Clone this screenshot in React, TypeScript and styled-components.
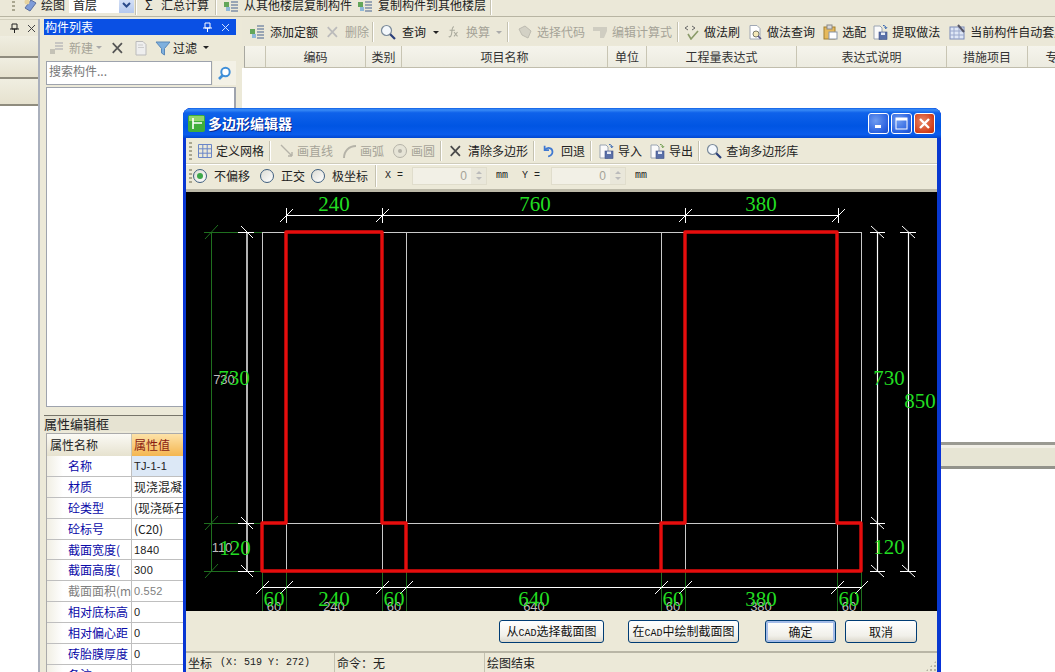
import React from "react";
import styled, { createGlobalStyle, css } from "styled-components";

const CJK = `"Noto Sans CJK SC", "Liberation Sans", sans-serif`;
const MONO = `"Liberation Mono", "Noto Sans CJK SC", monospace`;

const Global = createGlobalStyle`
  html, body { margin: 0; padding: 0; background: #fff; overflow: hidden; }
  * { box-sizing: border-box; }
`;

const Root = styled.div`
  position: relative; width: 1055px; height: 672px; overflow: hidden;
  display: flex; flex-direction: column; background: #ece9d8;
  font: 12px/1 ${CJK}; color: #222;
`;

/* ---------- top toolbar (cut by the screen edge) ---------- */
const TopBar = styled.div`
  height: 17px; overflow: hidden; flex: none;
  background: #ebe8d8; border-bottom: 1px solid #b8b5a3;
`;
const TopRow = styled.div`
  height: 9px; display: flex; align-items: center; padding-left: 12px; overflow: visible;
`;
const Grip = styled.span<{ $h?: number }>`
  flex: none; width: 3px; height: ${p => p.$h ?? 16}px;
  background: repeating-linear-gradient(to bottom, #a9a690 0 2px, transparent 2px 4px);
`;
const Sep = styled.span<{ $m?: number; $h?: number }>`
  flex: none; width: 2px; height: ${p => p.$h ?? 20}px; margin: 0 ${p => p.$m ?? 6}px;
  border-left: 1px solid #c5c2b0; border-right: 1px solid #fff;
`;
const Tool = styled.span<{ $off?: boolean; $gap?: number; $ml?: number }>`
  flex: none; display: inline-flex; align-items: center; gap: ${p => p.$gap ?? 5}px;
  margin-left: ${p => p.$ml ?? 0}px; white-space: nowrap; line-height: 14px;
  color: ${p => (p.$off ? "#a5a397" : "#222")};
  svg { flex: none; display: block; }
`;
const Sigma = styled.span`width: 9px; font-size: 13px;`;
const FloorSelect = styled.span`
  flex: none; width: 65px; height: 17px; margin-left: 4px; background: #fff; display: flex;
  align-items: center; justify-content: space-between; padding-left: 4px; position: relative;
`;
const FloorArrow = styled.span`
  width: 15px; height: 17px; background: linear-gradient(#dce6f8, #b4c8ee);
  display: flex; align-items: center; justify-content: center;
`;
const Caret = styled.span<{ $off?: boolean; $ml?: number }>`
  flex: none; width: 0; height: 0; margin-left: ${p => p.$ml ?? 6}px;
  border: 3px solid transparent; border-bottom-width: 0; border-top: 3px solid ${p => (p.$off ? "#aaa" : "#222")};
`;

/* ---------- workspace ---------- */
const Workspace = styled.div`flex: 1; min-height: 0; display: flex; padding-top: 1px;`;

const Rail = styled.div`
  width: 40px; flex: none; display: flex; flex-direction: column;
  border-right: 2px solid #aab0bc; margin-top: 1px; background: #fff;
`;
const RailHead = styled.div`
  height: 17px; background: #ebe8d8; border-top: 1px solid #d2cfbd; display: flex; align-items: center;
  justify-content: flex-end; gap: 8px; padding-right: 2px;
`;
const RailTab = styled.div<{ $h: number }>`
  height: ${p => p.$h}px; background: linear-gradient(#f0eee1, #e6e2cf);
  border-bottom: 2px solid #8f8c7e;
`;

const Panel = styled.div`
  width: 200px; flex: none; padding: 1px 4px 0; display: flex; flex-direction: column;
`;
const PanelTitle = styled.div`
  height: 16px; flex: none; background: #0a50e4; color: #fff; display: flex; align-items: center;
  justify-content: space-between; padding: 0 6px 0 1px; font-size: 12px;
`;
const TitleBtns = styled.span`display: flex; align-items: center; gap: 9px;`;
const PanelTools = styled.div`
  height: 25px; flex: none; display: flex; align-items: center; padding-left: 5px;
`;
const SearchRow = styled.div`height: 26px; flex: none; display: flex; padding: 1px 0 1px 2px; gap: 1px;`;
const SearchInput = styled.div`
  width: 166px; background: #fff; border: 1px solid #9ea3ad; color: #777; padding: 3px 2px; font-size: 12px;
`;
const SearchBtn = styled.div`
  width: 23px; background: #f3f1e6; display: flex; align-items: center; justify-content: center;
`;
const ListBox = styled.div`
  height: 320px; flex: none; margin: 1px 0 0 2px; background: #fff; border: 1px solid #9ea3ad; border-width: 1px 2px 1px 1px;
`;
const PropTitle = styled.div`
  height: 16px; flex: none; margin-top: 8px; border-top: 1px solid #77756a; background: #e6e3d2;
  font-size: 13px; line-height: 15px;
`;
const PropTable = styled.div`
  margin: 2px 0 0 2px; flex: none; background: #fff; border-top: 1px solid #aaa; border-left: 1px solid #aaa;
`;
const PropRow = styled.div`
  height: 20.9px; display: grid; grid-template-columns: 84px 1fr; border-bottom: 1px solid #bfbfbf;
`;
const PropHeadRow = styled(PropRow)`height: 22px; border-bottom: none;`;
const HeadName = styled.div`
  background: linear-gradient(#fbfaf5, #e6e2cf); padding: 5px 0 0 3px; font-size: 12px;
`;
const HeadValue = styled.div`
  background: linear-gradient(#fde2a8, #f4b650); color: #8a1c12; padding: 5px 0 0 2px; font-size: 12px; border-left: 1px solid #c8c5b3;
`;
const PropName = styled.div<{ $off?: boolean }>`
  padding: 4px 0 0 21px; white-space: nowrap; overflow: hidden;
  color: ${p => (p.$off ? "#808080" : "#0a0aa8")}; font-size: 12px;
  background: linear-gradient(to right, #f1efe4, #fff 16px);
`;
const PropValue = styled.div<{ $latin?: boolean; $off?: boolean; $sel?: boolean }>`
  border-left: 1px solid #bfbfbf; white-space: nowrap; overflow: hidden; padding: 4px 0 0 2px;
  color: ${p => (p.$off ? "#808080" : "#222")};
  background: ${p => (p.$sel ? "#dce8f6" : "#fff")};
  ${p => p.$latin && css`font-family: "Liberation Sans", sans-serif; font-size: 11px; letter-spacing: .2px; padding-top: 5px;`}
`;

const Work = styled.div`flex: 1; min-width: 0; display: flex; flex-direction: column; padding-left: 2px;`;
const WorkTools = styled.div`
  height: 26px; flex: none; margin-top: 1px; display: flex; align-items: center; padding-left: 7px; background: #ebe8d8;
  overflow: hidden;
`;
const GridHead = styled.div`
  height: 22px; flex: none; display: flex; margin: 1px 0 0 2px; background: linear-gradient(#f5f4ec, #ecebe0);
  border-bottom: 1px solid #c0bdac; border-left: 1px solid #a8a8a0; overflow: hidden;
`;
const GridCol = styled.div<{ $w: number }>`
  width: ${p => p.$w}px; flex: none; display: flex; align-items: center; justify-content: center;
  border-right: 1px solid #c8c5b3; color: #333; white-space: nowrap;
`;
const GridBody = styled.div`height: 374px; flex: none; background: #fff;`;
const Band = styled.div`
  height: 27px; flex: none; background: #e7e5d4; border-top: 3px solid #9a9a92; border-bottom: 3px solid #93938b;
  box-shadow: inset 0 3px 0 #f1efe6;
`;
const LowerBody = styled.div`flex: 1; background: #fff;`;

/* ---------- dialog ---------- */
const Dialog = styled.div`
  position: absolute; left: 183px; top: 108px; width: 758px; height: 564px;
  display: flex; flex-direction: column; background: #0838d0; border-radius: 8px 8px 0 0;
  padding: 0 4px 0 3px; box-shadow: inset 0 0 0 1px #0831d9;
`;
const TitleBar = styled.div`
  height: 30px; flex: none; margin: 0 -4px 0 -3px; padding: 0 6px 0 5px; display: flex; align-items: center;
  border-radius: 8px 8px 0 0; color: #fff; font-weight: 700; font-size: 14px; gap: 2px;
  background: linear-gradient(#0f5fe6 0, #3a8cf6 6%, #0f62ea 16%, #0055e3 60%, #0a5cec 88%, #0046d0 100%);
  text-shadow: 1px 1px 0 #0a2a90;
  svg { flex: none; }
`;
const TitleText = styled.span`flex: 1; margin: -1px 0 0 1px;`;
const WinBtn = styled.span<{ $close?: boolean }>`
  width: 21px; height: 21px; border: 1px solid #fff; border-radius: 3px; flex: none;
  display: flex; align-items: center; justify-content: center;
  background: ${p => p.$close
    ? "radial-gradient(circle at 40% 40%, #e88a6a, #d2401c 70%, #b8300f)"
    : "radial-gradient(circle at 35% 35%, #6f9cf0, #2a62e0 70%, #1c4cc8)"};
`;
const DlgTools = styled.div`
  height: 26px; flex: none; display: flex; align-items: center; padding-left: 3px; background: #ece9d8;
  border-bottom: 1px solid #cfccbb;
`;
const DlgOptions = styled.div`
  height: 28px; flex: none; display: flex; align-items: center; padding: 0 0 3px 3px; background: #ece9d8;
  border-bottom: 3px solid #bcb9a8; border-top: 1px solid #fff;
`;
const Radio = styled.span<{ $on?: boolean; $ml?: number }>`
  flex: none; width: 14px; height: 14px; border-radius: 50%; border: 1px solid #3f5f7f; margin-left: ${p => p.$ml ?? 0}px;
  background: linear-gradient(135deg, #dcdcd4, #fff); display: flex; align-items: center; justify-content: center;
  &::after { content: ""; width: 6px; height: 6px; border-radius: 50%; background: ${p => (p.$on ? "#3da84a" : "transparent")}; }
`;
const OptLabel = styled.span`flex: none; margin-left: 7px;`;
const Mono = styled.span<{ $ml?: number; $w?: number }>`
  flex: none; font: 10px/1 ${MONO}; color: #222; margin-left: ${p => p.$ml ?? 0}px; white-space: pre; width: ${p => (p.$w ? p.$w + "px" : "auto")};
`;
const Spin = styled.span<{ $ml: number }>`
  flex: none; width: 75px; height: 18px; margin-left: ${p => p.$ml}px; background: #f2f0e6;
  border: 1px solid #e0ddcc; display: flex; align-items: center; justify-content: flex-end;
  font: 12px/1 "Liberation Sans", sans-serif; color: #a5a397;
`;
const SpinArrows = styled.span`
  width: 15px; height: 16px; margin-left: 4px; background: #e9e7da; display: flex; flex-direction: column;
  align-items: center; justify-content: center; gap: 3px;
`;
const TriUp = styled.span`width: 0; height: 0; border: 3px solid transparent; border-top-width: 0; border-bottom: 3px solid #bbb;`;
const TriDown = styled.span`width: 0; height: 0; border: 3px solid transparent; border-bottom-width: 0; border-top: 3px solid #bbb;`;
const Canvas = styled.div`height: 419px; flex: none; background: #000; svg { display: block; }`;
const DlgFoot = styled.div`
  height: 42px; flex: none; background: #ece9d8; border-bottom: 2px solid #b9b6a6; display: flex; align-items: flex-start;
  padding: 9px 0 0 313px;
`;
const DlgButton = styled.button<{ $w: number; $ml?: number; $def?: boolean }>`
  width: ${p => p.$w}px; height: 23px; margin-left: ${p => p.$ml ?? 0}px; padding: 0; flex: none;
  border: 1px solid #003c74; border-radius: 3px; font: 12px/1 ${CJK}; color: #111;
  background: linear-gradient(#fff, #f1f0ea 70%, #dcd8cc);
  box-shadow: ${p => (p.$def ? "inset 0 0 0 2px #a4bce8" : "none")};
`;
const Narrow = styled.span`font: 10px/1 ${MONO};`;
const StatusBar = styled.div`
  flex: 1; background: #ece9d8; display: grid; grid-template-columns: 149px 150px 1fr; align-items: center; position: relative;
`;
const StatusCell = styled.div`
  height: 100%; display: flex; align-items: center; gap: 8px; padding-left: 2px; border-right: 1px solid #c4c1b0; white-space: nowrap;
  font-size: 12px;
`;
const StatusLast = styled(StatusCell)`border-right: none;`;
const SizeGrip = styled.span`
  position: absolute; right: 0; bottom: 0; width: 12px; height: 12px;
  background: radial-gradient(#b5b2a0 1px, transparent 1.2px) 0 0 / 4px 4px;
  clip-path: polygon(100% 0, 100% 100%, 0 100%);
`;

/* ---------- icons ---------- */
const I = ({ w = 16, children }: { w?: number; children: React.ReactNode }) => (
  <svg width={w} height={16} viewBox="0 0 16 16" fill="none">{children}</svg>
);
const CrossIcon = ({ c = "#555" }: { c?: string }) => (
  <I w={14}><path d="M2 2.5 12.5 13.5M12.5 2.5 2 13.5" stroke={c} strokeWidth="2" /></I>
);
const SearchIcon = ({ w = 16 }: { w?: number }) => (
  <I w={w}><circle cx="6.5" cy="6.5" r="5" fill="#f4f8fc" stroke="#7a8a9a" strokeWidth="1.2" /><path d="M10.2 10.2 15 15" stroke="#2a3f7a" strokeWidth="2.2" /></I>
);
const DocIcon = ({ off }: { off?: boolean }) => (
  <I><path d="M3 1.5h7l3 3V15H3z" fill={off ? "#eee" : "#fbfbfb"} stroke={off ? "#bbb" : "#8a96a8"} /><path d="M5 5h5M5 7.5h6" stroke={off ? "#ccc" : "#b0b8c4"} /></I>
);
const Disk = ({ arrow = "#2b5fb0" }: { arrow?: string }) => (
  <I>
    <path d="M2 2h6l2 2v11H2z" fill="#fafafa" stroke="#9aa4b2" />
    <rect x="7" y="8" width="8" height="7.5" fill="#5a70a8" stroke="#3f5288" strokeWidth=".6" />
    <rect x="9" y="8.5" width="4" height="2.5" fill="#e8ecf6" />
    <path d="M11 1.5c2 0 3 1 3 3M14 4.5l-1.5-1M14 4.5l1-1.3" stroke={arrow} strokeWidth="1" />
  </I>
);
const StackIcon = () => (
  <I>
    <rect x="1" y="5" width="5" height="5" fill="#63a65a" />
    <rect x="3" y="10" width="4" height="4" fill="#8fb8d8" />
    <path d="M8 2h7M8 5h7M8 8h7M8 11h7M8 14h7" stroke="#7f8fa8" strokeWidth="1.4" />
  </I>
);

/* ---------- drawing ---------- */
const GRAY = "#c9c9c9";
const WHITE = "#fff";
const DARK = "#1f6f1f";
const GREEN = "#22dd22";
const xs = [262, 286, 382, 406, 661, 685, 837, 861];
const topTicks = [286, 382, 685, 838];
const ys = [232, 523, 571];
const redPath = "M286 232H382V523H406V571H661V523H685V232H837V523H861V571H262V523H286Z";
const bottomLabels: [number, string][] = [[274, "60"], [334, "240"], [394, "60"], [534, "640"], [673, "60"], [761, "380"], [849, "60"]];

const DimText = styled.text`
  font-family: "Liberation Serif", serif; font-size: 21px; fill: ${GREEN}; text-anchor: middle;
`;
const SubText = styled.text`
  font-family: "Liberation Sans", sans-serif; font-size: 13px; fill: #bdbdbd; text-anchor: middle;
`;

const Drawing = () => (
  <svg width="751" height="419" viewBox="186 192 751 419">
    <g stroke={GRAY} strokeWidth="1" shapeRendering="crispEdges">
      <path d="M262 232.5H862M262 523.5H862" />
      {xs.map(x => <path key={x} d={`M${x + 0.5} 232V572`} />)}
    </g>
    <g stroke={DARK} strokeWidth="1">
      <path d="M211.5 232V572" shapeRendering="crispEdges" />
      {ys.map(y => (
        <g key={y}>
          <path d={`M204 ${y + 0.5}H262`} shapeRendering="crispEdges" />
          <path d={`M205 ${y + 7}L218 ${y - 7}`} />
        </g>
      ))}
    </g>
    <g stroke={WHITE} strokeWidth="1">
      <path d="M247 232V572" strokeWidth="1.4" />
      {ys.map(y => (
        <g key={y}>
          <path d={`M238 ${y + 0.5}H254`} shapeRendering="crispEdges" />
          <path d={`M241 ${y - 6}L253 ${y + 6}`} />
        </g>
      ))}
    </g>
    <g stroke={WHITE} strokeWidth="1">
      <path d="M877.5 232V572M908.5 232V572" strokeWidth="1.2" />
      {ys.map(y => (
        <g key={y}>
          <path d={`M870 ${y + 0.5}H885`} shapeRendering="crispEdges" />
          <path d={`M871 ${y - 6}L884 ${y + 6}`} />
        </g>
      ))}
      {[232, 571].map(y => (
        <g key={y}>
          <path d={`M900 ${y + 0.5}H916`} shapeRendering="crispEdges" />
          <path d={`M902 ${y - 6}L915 ${y + 6}`} />
        </g>
      ))}
    </g>
    <g stroke={WHITE} strokeWidth="1">
      <path d="M286 215.5H838" shapeRendering="crispEdges" />
      {topTicks.map(x => (
        <g key={x}>
          <path d={`M${x + 0.5} 208V223`} shapeRendering="crispEdges" />
          <path d={`M${x - 6} 222L${x + 7} 209`} />
        </g>
      ))}
    </g>
    <g strokeWidth="1">
      {xs.map(x => <path key={x} stroke={DARK} d={`M${x + 0.5} 572V611`} shapeRendering="crispEdges" />)}
      <path d="M262 587.5H861" stroke={WHITE} shapeRendering="crispEdges" />
      {xs.map(x => <path key={x} stroke={WHITE} d={`M${x - 6} 594L${x + 7} 581`} />)}
    </g>
    <path d={redPath} fill="none" stroke="#e60d0d" strokeWidth="3.4" strokeLinejoin="round" />
    <SubText x="224" y="384">730</SubText>
    <SubText x="222" y="552">110</SubText>
    {bottomLabels.map(([x, t]) => <SubText key={x} x={x} y="611">{t}</SubText>)}
    <DimText x="334" y="211">240</DimText>
    <DimText x="535" y="211">760</DimText>
    <DimText x="761" y="211">380</DimText>
    <DimText x="234" y="385">730</DimText>
    <DimText x="235" y="555">120</DimText>
    <DimText x="889" y="385">730</DimText>
    <DimText x="889" y="554">120</DimText>
    <DimText x="920" y="408">850</DimText>
    {bottomLabels.map(([x, t]) => <DimText key={x} x={x} y="606">{t}</DimText>)}
  </svg>
);

const props: { n: string; v: string; latin?: boolean; off?: boolean; sel?: boolean }[] = [
  { n: "名称", v: "TJ-1-1", latin: true, sel: true },
  { n: "材质", v: "现浇混凝土" },
  { n: "砼类型", v: " (现浇砾石混凝土)" },
  { n: "砼标号", v: " (C20)" },
  { n: "截面宽度(", v: "1840", latin: true },
  { n: "截面高度(", v: "300", latin: true },
  { n: "截面面积(m", v: "0.552", latin: true, off: true },
  { n: "相对底标高", v: "0", latin: true },
  { n: "相对偏心距", v: "0", latin: true },
  { n: "砖胎膜厚度", v: "0", latin: true },
  { n: "备注", v: "" },
];

const cols: [number, string][] = [
  [21, ""], [100, "编码"], [36, "类别"], [206, "项目名称"], [39, "单位"], [150, "工程量表达式"],
  [150, "表达式说明"], [81, "措施项目"], [60, "专业"],
];

export default function App() {
  return (
    <Root>
      <Global />
      <TopBar>
        <TopRow>
          <Grip />
          <Tool $ml={7} $gap={3}>
            <I><path d="M3 11l6-8 5 3-6 8z" fill="#7d9bd8" stroke="#5a6f9e" /><circle cx="5" cy="5" r="2.5" fill="#e7d3a0" /></I>
            绘图
          </Tool>
          <FloorSelect>首层<FloorArrow><svg width="9" height="6" viewBox="0 0 9 6"><path d="M1 1l3.5 3.5L8 1" stroke="#2a4a8a" strokeWidth="2" fill="none" /></svg></FloorArrow></FloorSelect>
          <Sep $m={1} />
          <Tool $ml={7} $gap={7}><Sigma>Σ</Sigma>汇总计算</Tool>
          <Sep />
          <Tool><StackIcon />从其他楼层复制构件</Tool>
          <Tool $ml={5}><StackIcon />复制构件到其他楼层</Tool>
          <Sep $m={4} />
        </TopRow>
      </TopBar>
      <Workspace>
        <Rail>
          <RailHead>
            <svg width="9" height="10" viewBox="0 0 9 10"><path d="M2 1h5v5H2zM0 6h9M4.5 6v4" stroke="#222" fill="none" /></svg>
            <svg width="9" height="9" viewBox="0 0 9 9"><path d="M1 1l7 7M8 1L1 8" stroke="#444" /></svg>
          </RailHead>
          <RailTab $h={22} />
          <RailTab $h={21} />
          <RailTab $h={27} />
        </Rail>
        <Panel>
          <PanelTitle>
            构件列表
            <TitleBtns>
              <svg width="9" height="10" viewBox="0 0 9 10"><path d="M2 1h5v5H2zM0 6h9M4.5 6v4" stroke="#fff" fill="none" /></svg>
              <svg width="9" height="9" viewBox="0 0 9 9"><path d="M1 1l7 7M8 1L1 8" stroke="#cfe0ff" /></svg>
            </TitleBtns>
          </PanelTitle>
          <PanelTools>
            <Tool $off $gap={4}>
              <I><rect x="1" y="9" width="5" height="5" fill="#c4c2b6" /><path d="M6 3h8M6 6h8M6 9h8" stroke="#bbb" strokeWidth="1.4" /></I>
              新建
            </Tool>
            <Caret $off $ml={3} />
            <Tool $ml={9}><CrossIcon /></Tool>
            <Tool $ml={8}><DocIcon off /></Tool>
            <Tool $ml={6} $gap={2}>
              <I><path d="M1 2h14L9.5 8.5V15l-3-2V8.5z" fill="#7fb0de" stroke="#5a88b8" /></I>
              过滤
            </Tool>
            <Caret $ml={6} />
          </PanelTools>
          <SearchRow>
            <SearchInput>搜索构件...</SearchInput>
            <SearchBtn>
              <svg width="15" height="15" viewBox="0 0 15 15"><circle cx="8.5" cy="6" r="4.2" fill="#fff" stroke="#3f8fd8" strokeWidth="2" /><path d="M5.5 9.5 2 13" stroke="#3f8fd8" strokeWidth="2.6" /></svg>
            </SearchBtn>
          </SearchRow>
          <ListBox />
          <PropTitle>属性编辑框</PropTitle>
          <PropTable>
            <PropHeadRow><HeadName>属性名称</HeadName><HeadValue>属性值</HeadValue></PropHeadRow>
            {props.map(p => (
              <PropRow key={p.n}>
                <PropName $off={p.off}>{p.n}</PropName>
                <PropValue $latin={p.latin} $off={p.off} $sel={p.sel}>{p.v}</PropValue>
              </PropRow>
            ))}
          </PropTable>
        </Panel>
        <Work>
          <WorkTools>
            <Tool><StackIcon />添加定额</Tool>
            <Tool $ml={8} $off><CrossIcon c="#bbb" />删除</Tool>
            <Sep $m={3} />
            <Tool $ml={2}><SearchIcon w={18} />查询</Tool>
            <Caret $ml={7} />
            <Tool $ml={8} $off><I w={14}><path d="M8 2C5 2 6 8 5 11S3 14 2 13M3 6h6M8 8l4 5M12 8l-4 5" stroke="#a9a99c" strokeWidth="1.2" /></I>换算</Tool>
            <Caret $off $ml={6} />
            <Sep $m={5} />
            <Tool $ml={3} $gap={4} $off><I><path d="M2 5l6-3 6 5-3 7-6-3z" fill="#d3d1c5" stroke="#bdbbb0" /></I>选择代码</Tool>
            <Tool $ml={7} $gap={4} $off><I><path d="M1 3h14v4l-3 7H8V7H1z" fill="#cfcdc1" /></I>编辑计算式</Tool>
            <Sep $m={5} />
            <Tool $gap={4}>
              <I><path d="M1 4l3-2M1 4l3 2M8 2l3 2-3 2" stroke="#666" fill="none" /><path d="M14 7 7 15l-3-5" stroke="#8a9a68" strokeWidth="1.6" fill="none" /></I>
              做法刷
            </Tool>
            <Tool $ml={7} $gap={4}><I><path d="M3 1.5h7l3 3V15H3z" fill="#fff" stroke="#a0a8b4" /><circle cx="9" cy="10" r="3" fill="#f5e9b8" stroke="#7a7a6a" /><path d="M11 12l3 3" stroke="#5a5a8a" strokeWidth="1.6" /></I>做法查询</Tool>
            <Tool $ml={7} $gap={4}><I><rect x="2" y="3" width="11" height="12" fill="#e6b95a" stroke="#a27f2e" /><rect x="5" y="1" width="5" height="4" fill="#d9d9d9" stroke="#888" /><rect x="7" y="8" width="8" height="7" fill="#fff" stroke="#8a96a8" /></I>选配</Tool>
            <Tool $ml={6} $gap={4}><Disk />提取做法</Tool>
            <Tool $ml={8} $gap={4}><I w={18}><rect x="1" y="3" width="14" height="12" fill="#dfe7f6" stroke="#7a8ab8" /><path d="M1 7h14M1 11h14M5 3v12M10 3v12" stroke="#9aa8cc" /><path d="M9 1l6 7" stroke="#556" strokeWidth="2" /></I>当前构件自动套用做法</Tool>
          </WorkTools>
          <GridHead>
            {cols.map(([w, t], i) => <GridCol key={i} $w={w}>{t}</GridCol>)}
          </GridHead>
          <GridBody />
          <Band />
          <LowerBody />
        </Work>
      </Workspace>

      <Dialog>
        <TitleBar>
          <svg width="17" height="17" viewBox="0 0 17 17">
            <rect width="17" height="17" rx="2" fill="#3fae3a" />
            <rect x="1" y="1" width="15" height="5" fill="#8fd66a" />
            <path d="M5 3v11M5 8h9" stroke="#fff" strokeWidth="1.6" />
          </svg>
          <TitleText>多边形编辑器</TitleText>
          <WinBtn><svg width="11" height="11" viewBox="0 0 11 11"><rect x="2" y="7" width="6" height="3" fill="#fff" /></svg></WinBtn>
          <WinBtn><svg width="13" height="13" viewBox="0 0 13 13"><rect x="1" y="1" width="11" height="11" fill="none" stroke="#fff" /><rect x="1" y="1" width="11" height="2.5" fill="#fff" /></svg></WinBtn>
          <WinBtn $close><svg width="13" height="13" viewBox="0 0 13 13"><path d="M2 2l9 9M11 2l-9 9" stroke="#fff" strokeWidth="2.4" /></svg></WinBtn>
        </TitleBar>
        <DlgTools>
          <Grip $h={18} />
          <Tool $ml={5} $gap={3}>
            <I><path d="M1.5 1.5h13v13h-13zM1.5 5.8h13M1.5 10.2h13M5.8 1.5v13M10.2 1.5v13" stroke="#6a86c8" /></I>
            定义网格
          </Tool>
          <Sep $m={5} />
          <Tool $ml={3} $off $gap={2}>
            <I><path d="M2 2l11 11M13 13V9M13 13H9" stroke="#b5b3a8" strokeWidth="1.4" fill="none" /></I>
            画直线
          </Tool>
          <Tool $ml={8} $off $gap={3}>
            <I><path d="M3 15C3 8 8 3 15 3" stroke="#b5b3a8" strokeWidth="2" fill="none" /></I>
            画弧
          </Tool>
          <Tool $ml={8} $off $gap={3}>
            <I><circle cx="8" cy="8" r="6.5" fill="#e6e4d6" stroke="#b5b3a8" /><circle cx="8" cy="8" r="2" fill="#b5b3a8" /></I>
            画圆
          </Tool>
          <Sep $m={5} />
          <Tool $ml={2}><CrossIcon c="#4a4a4a" />清除多边形</Tool>
          <Sep $m={5} />
          <Tool $ml={2}>
            <I w={14}><path d="M3 2v5h5" stroke="#3f78d0" strokeWidth="2" fill="none" /><path d="M3 7c3-4 9-3 9 2 0 3-3 5-5 5" stroke="#3f78d0" strokeWidth="2" fill="none" /></I>
            回退
          </Tool>
          <Sep $m={5} />
          <Tool $ml={1} $gap={4}><Disk />导入</Tool>
          <Tool $ml={7} $gap={4}><Disk arrow="#6a9a4a" />导出</Tool>
          <Sep $m={5} />
          <Tool $ml={1} $gap={4}><SearchIcon />查询多边形库</Tool>
        </DlgTools>
        <DlgOptions>
          <Grip $h={14} />
          <Radio $on $ml={1} />
          <OptLabel>不偏移</OptLabel>
          <Radio $ml={10} />
          <OptLabel>正交</OptLabel>
          <Radio $ml={6} />
          <OptLabel>极坐标</OptLabel>
          <Sep $m={7} $h={22} />
          <Mono $ml={1} $w={19}>X =</Mono>
          <Spin $ml={8}>0<SpinArrows><TriUp /><TriDown /></SpinArrows></Spin>
          <Mono $ml={9} $w={12}>mm</Mono>
          <Mono $ml={14} $w={19}>Y =</Mono>
          <Spin $ml={10}>0<SpinArrows><TriUp /><TriDown /></SpinArrows></Spin>
          <Mono $ml={9} $w={12}>mm</Mono>
        </DlgOptions>
        <Canvas><Drawing /></Canvas>
        <DlgFoot>
          <DlgButton $w={105}>从<Narrow>CAD</Narrow>选择截面图</DlgButton>
          <DlgButton $w={111} $ml={24}>在<Narrow>CAD</Narrow>中绘制截面图</DlgButton>
          <DlgButton $w={71} $ml={26} $def>确定</DlgButton>
          <DlgButton $w={72} $ml={9}>取消</DlgButton>
        </DlgFoot>
        <StatusBar>
          <StatusCell>坐标<Mono>(X: 519 Y: 272)</Mono></StatusCell>
          <StatusCell>命令：无</StatusCell>
          <StatusLast>绘图结束</StatusLast>
          <SizeGrip />
        </StatusBar>
      </Dialog>
    </Root>
  );
}
